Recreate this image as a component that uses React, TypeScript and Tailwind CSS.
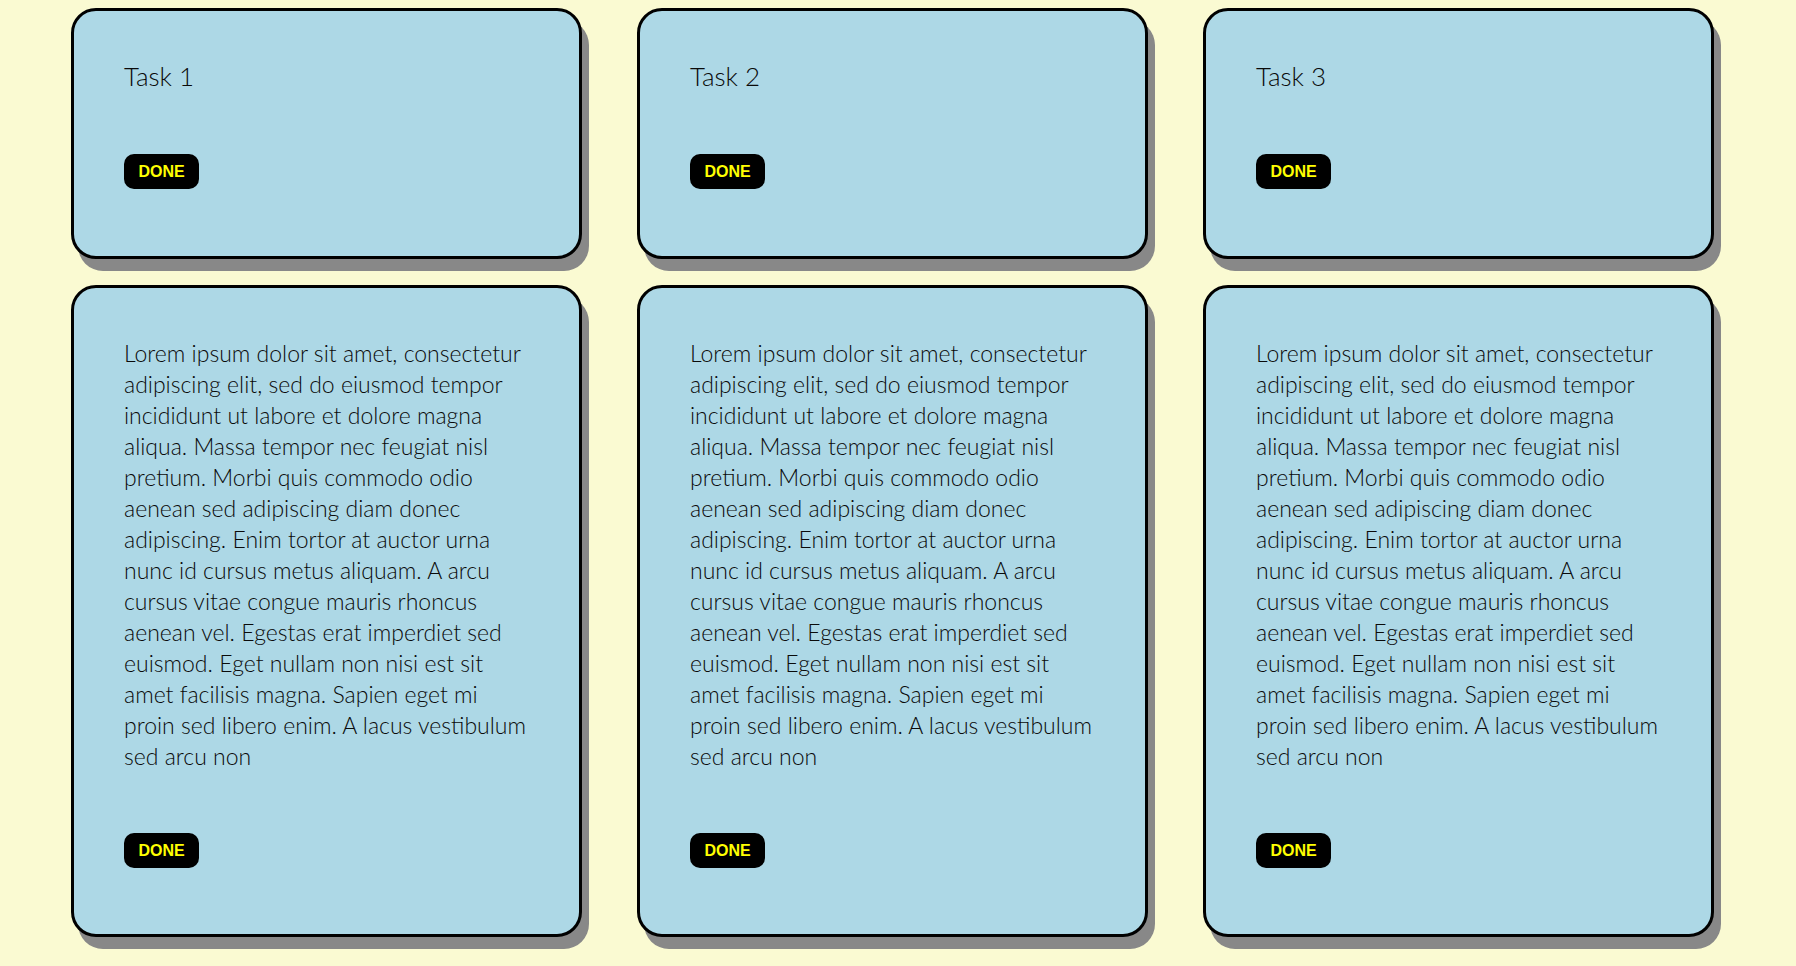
const lorem =
  'Lorem ipsum dolor sit amet, consectetur adipiscing elit, sed do eiusmod tempor incididunt ut labore et dolore magna aliqua. Massa tempor nec feugiat nisl pretium. Morbi quis commodo odio aenean sed adipiscing diam donec adipiscing. Enim tortor at auctor urna nunc id cursus metus aliquam. A arcu cursus vitae congue mauris rhoncus aenean vel. Egestas erat imperdiet sed euismod. Eget nullam non nisi est sit amet facilisis magna. Sapien eget mi proin sed libero enim. A lacus vestibulum sed arcu non'

const tasks = ['Task 1', 'Task 2', 'Task 3']

function DoneButton() {
  return (
    <button
      type="button"
      className="inline-flex h-[35px] w-[75px] items-center justify-center rounded-[10px] bg-black font-['Liberation_Sans',Arial,sans-serif] text-[16px] font-bold text-[#ffff00]"
    >
      DONE
    </button>
  )
}

function Card({ children, tall }: { children: React.ReactNode; tall?: boolean }) {
  return (
    <article
      className={`flex flex-col items-start rounded-[25px] border-[3px] border-black bg-[#add8e6] px-[50px] pt-[50px] pb-[66px] shadow-[7px_12px_0_#888888] ${
        tall ? 'h-[652px]' : 'h-[251px]'
      }`}
    >
      {children}
      <div className="mt-[61px]">
        <DoneButton />
      </div>
    </article>
  )
}

export default function App() {
  return (
    <div className="min-h-screen bg-[#fafad2] pt-[8px] pl-[71px] font-['Lato','Liberation_Sans',sans-serif] text-[#0a0a0a]">
      <div className="grid w-fit grid-cols-[511px_511px_511px] gap-x-[55px] gap-y-[26px]">
        {tasks.map((task) => (
          <Card key={task}>
            <p className="-mt-[1px] mb-[1px] text-[26px] leading-[32px] font-light">{task}</p>
          </Card>
        ))}
        {tasks.map((task) => (
          <Card key={`${task}-body`} tall>
            <p className="text-[23px] leading-[31px] font-light">{lorem}</p>
          </Card>
        ))}
      </div>
    </div>
  )
}
